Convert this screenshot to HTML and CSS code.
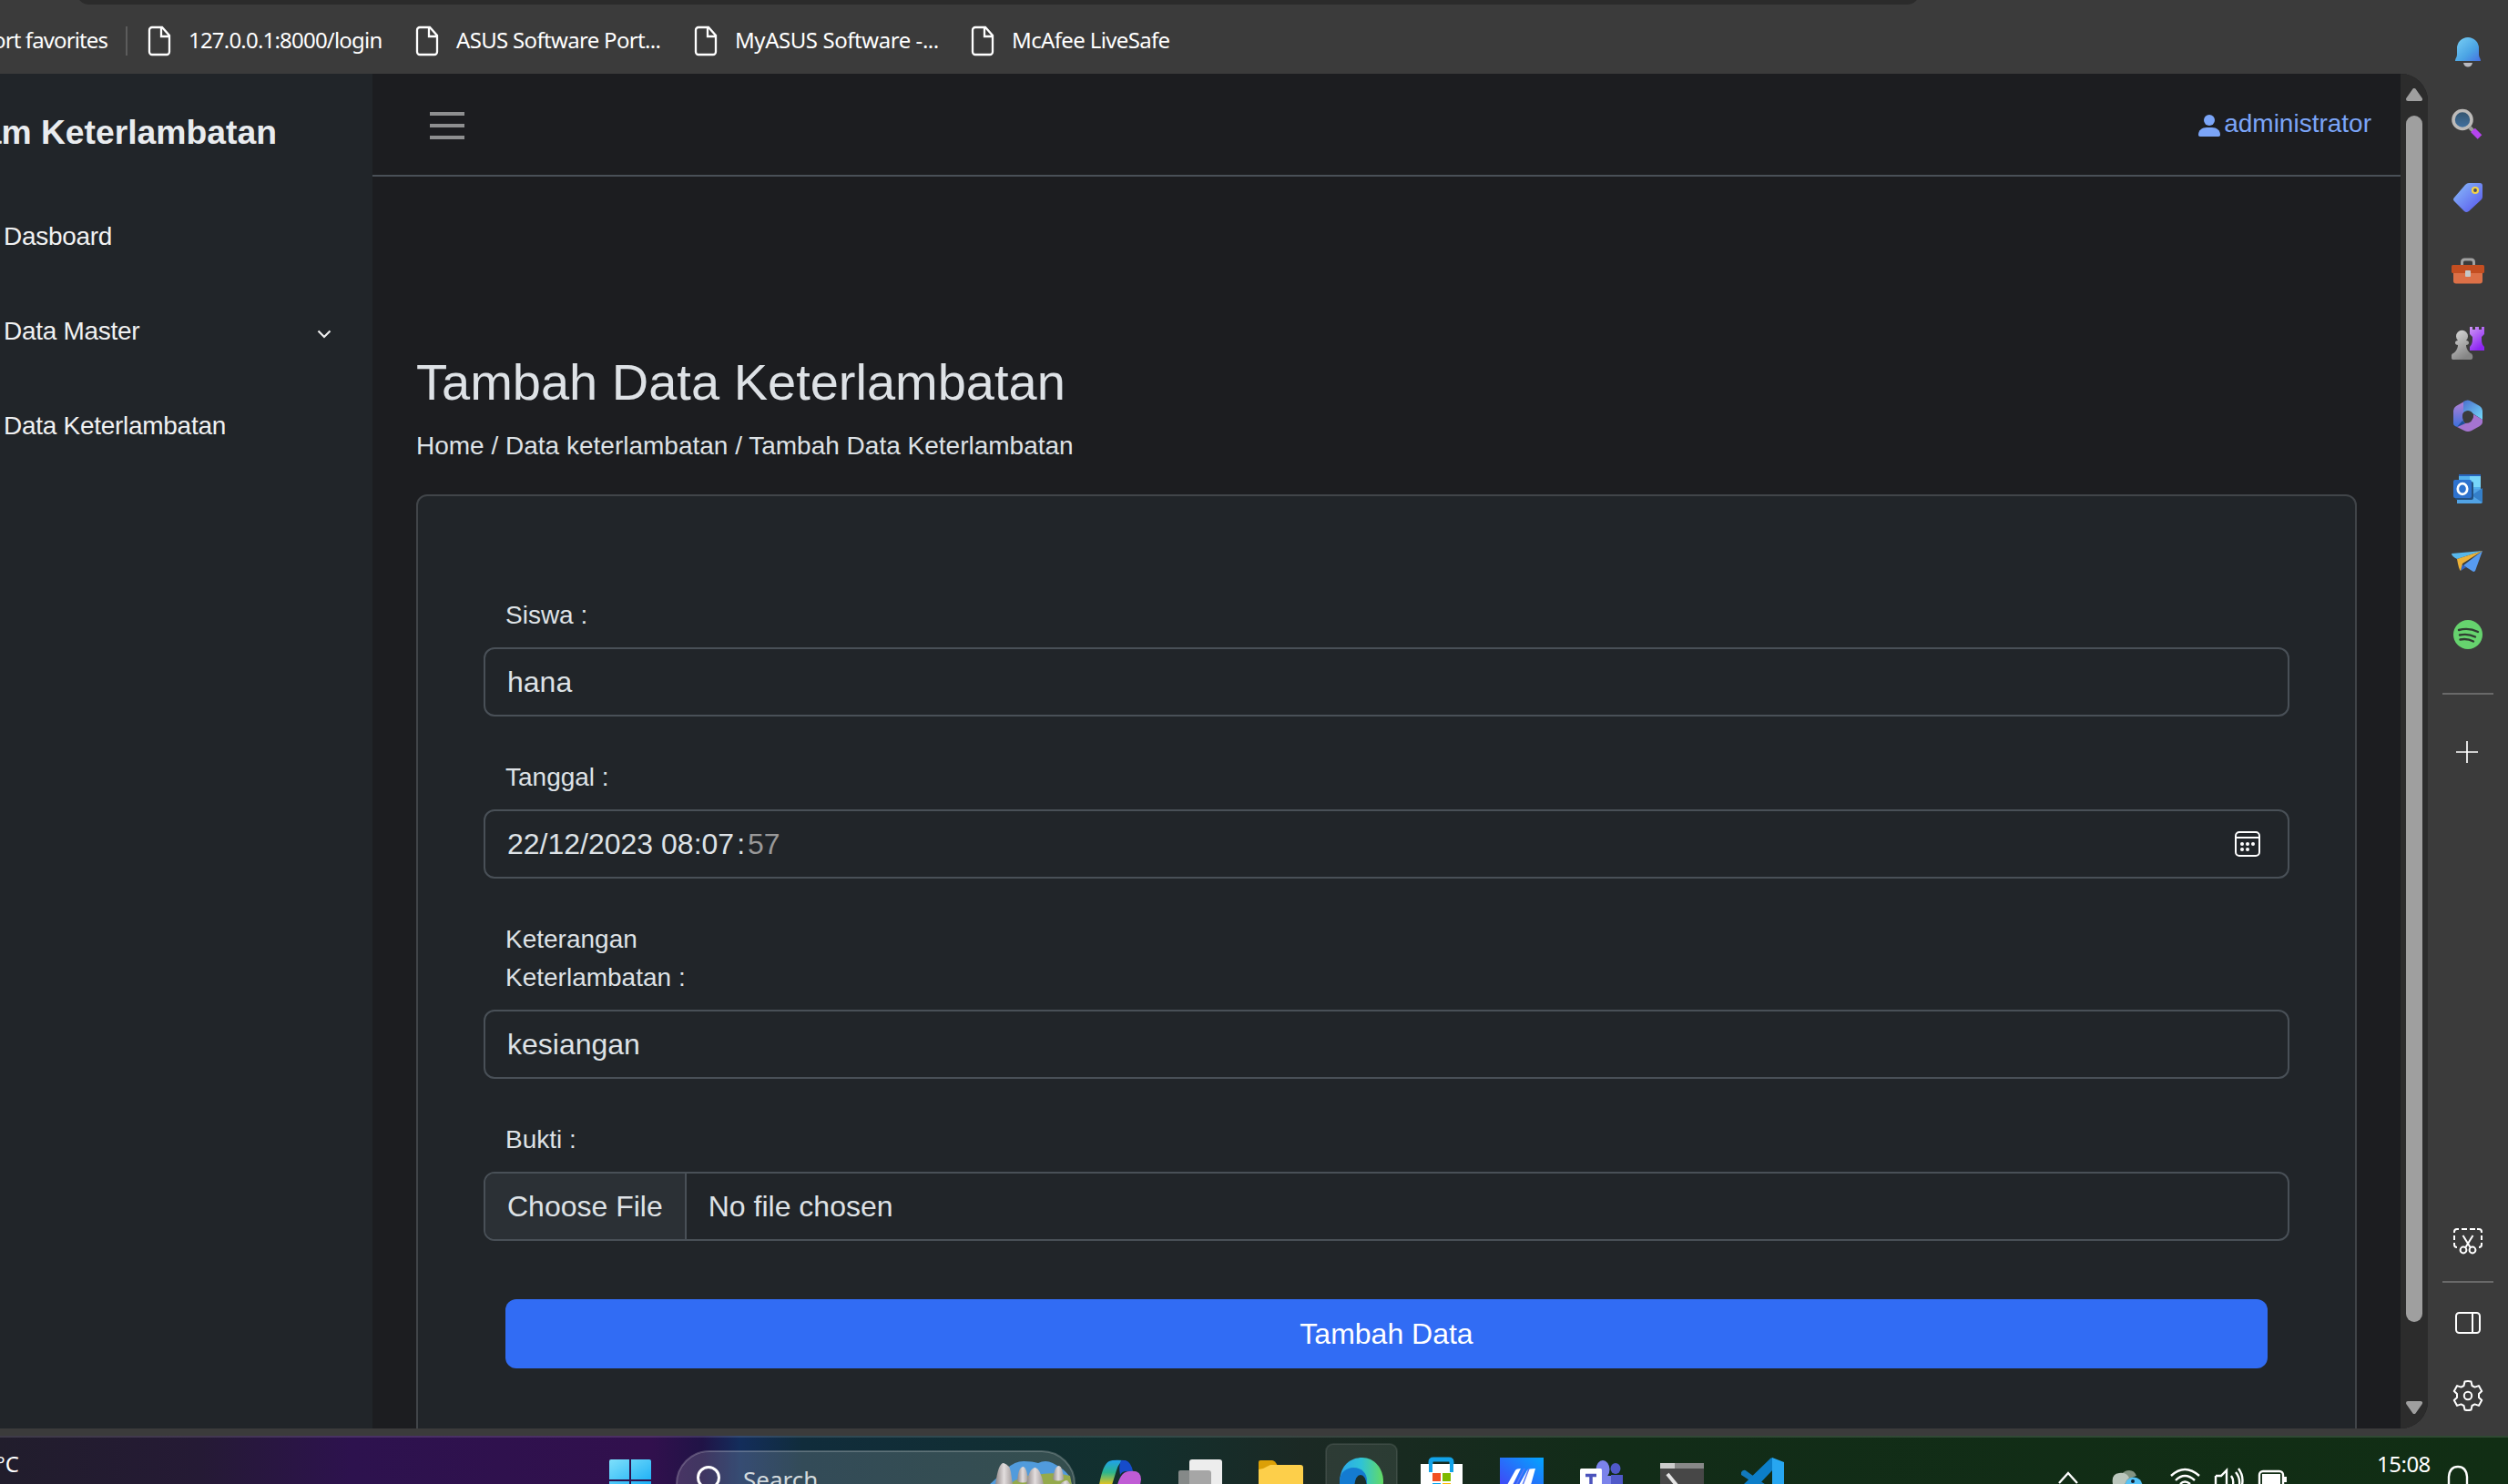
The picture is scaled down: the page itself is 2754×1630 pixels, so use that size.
FILE: index.html
```html
<!DOCTYPE html>
<html lang="id"><head><meta charset="utf-8"><title>Tambah Data Keterlambatan</title><link rel="stylesheet" href="styles.css"></head>
<body>
<div class="screen">
  <div class="browser">
    <div class="window">
      <header class="favorites">
        <div class="address"></div>
        <span class="fav fav-import">Import favorites</span><i class="fav-sep"></i>
        <span class="fav f1"><svg class="doc" viewBox="0 0 26 34"><path d="M5 2h11l8 9v18a3 3 0 0 1-3 3H5a3 3 0 0 1-3-3V5a3 3 0 0 1 3-3zM15 2v10h9"/></svg><b>127.0.0.1:8000/login</b></span>
        <span class="fav f2"><svg class="doc" viewBox="0 0 26 34"><path d="M5 2h11l8 9v18a3 3 0 0 1-3 3H5a3 3 0 0 1-3-3V5a3 3 0 0 1 3-3zM15 2v10h9"/></svg><b>ASUS Software Port...</b></span>
        <span class="fav f3"><svg class="doc" viewBox="0 0 26 34"><path d="M5 2h11l8 9v18a3 3 0 0 1-3 3H5a3 3 0 0 1-3-3V5a3 3 0 0 1 3-3zM15 2v10h9"/></svg><b>MyASUS Software -...</b></span>
        <span class="fav f4"><svg class="doc" viewBox="0 0 26 34"><path d="M5 2h11l8 9v18a3 3 0 0 1-3 3H5a3 3 0 0 1-3-3V5a3 3 0 0 1 3-3zM15 2v10h9"/></svg><b>McAfee LiveSafe</b></span>
      </header>
      <div class="viewport">
        <nav class="sidebar">
          <div class="brand"><span>Rekam Keterlambatan</span></div>
          <a class="side-link">Dasboard</a>
          <a class="side-link">Data Master<svg class="chev" viewBox="0 0 16 10"><path d="M1.5 1.5 8 8l6.500-6.500"/></svg></a>
          <a class="side-link">Data Keterlambatan</a>
        </nav>
        <main class="main">
          <div class="topbar">
            <div class="burger"><i></i><i></i><i></i></div>
            <a class="user"><svg viewBox="0 0 24 24"><circle cx="12" cy="6" r="6"/><path d="M0 22c0-5 4-8 9-8h6c5 0 9 3 9 8 0 1.300-.7 2-2 2H2c-1.300 0-2-.7-2-2z"/></svg><span>administrator</span></a>
          </div>
          <h1>Tambah Data Keterlambatan</h1>
          <p class="crumbs">Home / Data keterlambatan / Tambah Data Keterlambatan</p>
          <form class="card">
            <label>Siswa :</label>
            <div class="input">hana</div>
            <label>Tanggal :</label>
            <div class="input date"><span>22/12/2023 08:07<span class="colon">:</span><em>57</em></span>
              <svg viewBox="0 0 28 28"><rect x="1" y="1" width="26" height="26" rx="4"/><path d="M1 7h26"/><g class="dots"><circle cx="8" cy="14" r="2"/><circle cx="14" cy="14" r="2"/><circle cx="20" cy="14" r="2"/><circle cx="8" cy="20" r="2"/><circle cx="14" cy="20" r="2"/></g></svg></div>
            <label>Keterangan<br>Keterlambatan :</label>
            <div class="input">kesiangan</div>
            <label>Bukti :</label>
            <div class="input file"><span class="choose">Choose File</span><span>No file chosen</span></div>
            <button type="button">Tambah Data</button>
          </form>
        </main>
        <div class="scroll">
          <svg viewBox="0 0 18 14"><path d="M9 2 16 12H2z"/></svg>
          <div class="thumb"></div>
          <svg class="down" viewBox="0 0 18 14"><path d="M9 12 16 2H2z"/></svg>
        </div>
      </div>
    </div>
    <aside class="rail">
      <svg class="ri" viewBox="0 0 36 36"><defs><linearGradient id="bell" x2="1" y2="1"><stop stop-color="#7ad0f5"/><stop offset=".6" stop-color="#4ba4e4"/><stop offset="1" stop-color="#4670e0"/></linearGradient></defs><path d="M4 27c0-3 2-4 2-7v-7a12 12 0 0 1 24 0v7c0 3 2 4 2 7z" fill="url(#bell)"/><path d="M13 29h10c-1 6-9 6-10 0z" fill="#b9b9bf"/></svg>
      <svg class="ri r-search" viewBox="0 0 36 36"><defs><linearGradient id="lens" y2="1" x2="0"><stop stop-color="#34536b"/><stop offset="1" stop-color="#4273a4"/></linearGradient></defs><path d="m20 22 4 4" stroke="#999" stroke-width="4"/><path d="m23.500 25 7.500 7.500" stroke="#b544ee" stroke-width="6.500"/><circle cx="12" cy="13.500" r="10" fill="url(#lens)" stroke="#bdbbb9" stroke-width="3.600"/></svg>
      <svg class="ri r-tag" viewBox="0 0 36 36"><defs><linearGradient id="tag" x2="1" y2="1"><stop stop-color="#8bc0fa"/><stop offset=".8" stop-color="#6068ef"/><stop offset="1" stop-color="#4b45ce"/></linearGradient></defs><path d="M19 2h12q3 0 3 3v12q0 2-1.500 3.500L19 33q-3 2-5 0L3 22q-2-2 0-4L15 4q2-2 4-2z" fill="url(#tag)"/><circle cx="26" cy="10" r="3" fill="#464e61" stroke="#f4d245" stroke-width="2.200"/></svg>
      <svg class="ri r-tools" viewBox="0 0 36 36"><path d="M11.500 12V8q0-3 3-3h7q3 0 3 3v4" fill="none" stroke="#a2a2a2" stroke-width="3"/><rect x="2" y="16" width="32" height="15.500" rx="3" fill="#dc7047"/><rect y="11" width="36" height="9" rx="1.500" fill="#c44e21"/><rect x="15" y="17" width="6" height="7" rx="1" fill="#c4c7c8"/></svg>
      <svg class="ri r-games" viewBox="0 0 36 36"><defs><linearGradient id="rook" y2="1" x2=".5"><stop stop-color="#cf99f5"/><stop offset="1" stop-color="#8d25f3"/></linearGradient><linearGradient id="pawn" y2="1" x2=".5"><stop stop-color="#ddd"/><stop offset="1" stop-color="#858585"/></linearGradient></defs><path d="M20 0h3v3h3V0h4v3h3V0h3v8l-3 3c0 5 0 8 3 11v4H20v-4c3-3 3-6 3-11l-3-3z" fill="url(#rook)"/><path d="M7 15a6.500 6.500 0 1 1 9 0c4 0 4 5 0 5 0 4 3 8 5 9 3 1 3 7 0 7H2c-3 0-3-6 0-7 2-1 5-5 5-9-4 0-4-5 0-5z" fill="url(#pawn)"/></svg>
      <svg class="ri" viewBox="0 0 36 36"><defs><linearGradient id="ma" y2="1" x2="0"><stop stop-color="#b481d6"/><stop offset="1" stop-color="#3d70dc"/></linearGradient><linearGradient id="mb" x2="1" y2="1"><stop stop-color="#4c70ce"/><stop offset="1" stop-color="#72dafa"/></linearGradient></defs><path d="M14 2 5 7q-3 2-3 5v14q0 3 5 4l8-4q-3-3-3-8 0-3 2-5z" fill="url(#ma)"/><path d="M13 14V2q5-3 9 0l9 5q3 2 3 5v10L23 15q-4-4-10-1z" fill="url(#mb)"/><path d="m6 30 9-4q9 0 9-10l10 6v3q0 2-3 4l-9 5q-4 2-8 0z" fill="#a574d0"/><path d="m6 30 9-4-3-3z" fill="#1f4f98"/><circle cx="18" cy="18" r="6" fill="#3b3b3b"/></svg>
      <svg class="ri" viewBox="0 0 36 36"><path d="M8 2h24v18H8z" fill="#54b1ec"/><path d="M20 2h12v14H20z" fill="#77d6fa"/><path d="M8 2h24v2H8z" fill="#2865bd"/><path d="M6 18h28v14q0 2-2 2H6z" fill="#51a3e5"/><path d="M34 17v16L22 25z" fill="#347fc9"/><rect x="4" y="10" width="20" height="20" rx="2" fill="#23507f"/><rect x="2" y="8" width="20" height="20" rx="2" fill="#2e72ce"/><ellipse cx="12" cy="18" rx="5.200" ry="5.800" fill="none" stroke="#fff" stroke-width="2.700"/></svg>
      <svg class="ri" viewBox="0 0 36 36"><path d="M0 9 34 6 6 15Q0 12 0 9z" fill="#58b8ec"/><path d="M34 6 13 22l11 7q1 0 2-1z" fill="#579bf0"/><path d="m11 21-1 7 6-4z" fill="#2f64c7"/><path d="M6 15 34 6 12 20l-2 8q-2-1-4-13z" fill="#edb238"/></svg>
      <svg class="ri" viewBox="0 0 36 36"><circle cx="18" cy="18" r="16" fill="#66d36e"/><path d="M8 13q11-3 21 2M9 18.500q9-2 17 2M9.500 23.500q8-1.500 14.500 2" fill="none" stroke="#303c32" stroke-width="2.400" stroke-linecap="round"/></svg>
      <i class="rail-line"></i>
      <svg class="ri line r-plus" viewBox="0 0 36 36"><path d="M17 6v24M5 18h24"/></svg>
      <svg class="ri line r-shot" viewBox="0 0 36 36"><path d="M3 8V7q0-3 3-3h2M11 4h6M20 4h6M28 4h2q3 0 3 3v1M3 11v5M33 11v5M3 19v2q0 3 3 3M33 19v2q0 3-3 3M12.500 11l8 13M23.500 11l-8 13"/><circle cx="13" cy="27" r="3.400"/><circle cx="23" cy="27" r="3.400"/></svg>
      <i class="rail-line r-low"></i>
      <svg class="ri line r-panel" viewBox="0 0 36 36"><rect x="5" y="7" width="26" height="22" rx="3.500"/><path d="M23 7v22"/></svg>
      <svg class="ri line" viewBox="0 0 36 36"><path d="M14.500 2.500q3.500-1 7 0l1 4.500 3 1.600 4.400-1.500 3.300 6-3.200 3v3.800l3.200 3-3.300 6-4.400-1.500-3 1.600-1 4.500q-3.500 1-7 0l-1-4.500-3-1.600-4.400 1.500-3.300-6 3.200-3v-3.800l-3.200-3 3.300-6 4.400 1.500 3-1.600z"/><circle cx="18" cy="18" r="4.200"/></svg>
    </aside>
  </div>
  <footer class="taskbar">
    <span class="temp">29°C</span>
    <svg class="tasks" viewBox="0 0 2754 51"><defs><linearGradient id="win" x2="1" y2="1"><stop stop-color="#7ee0fb"/><stop offset="1" stop-color="#18adf5"/></linearGradient><linearGradient id="edge"><stop stop-color="#2ba6ec"/><stop offset=".5" stop-color="#2fc3d6"/><stop offset="1" stop-color="#64db63"/></linearGradient><linearGradient id="cop" y2="1" x2="0"><stop stop-color="#20a0ee"/><stop offset=".5" stop-color="#2bb58e"/><stop offset="1" stop-color="#ecc41b"/></linearGradient><linearGradient id="my" x2="1" y1="1" y2="0"><stop stop-color="#4a3af5"/><stop offset="1" stop-color="#02a6ff"/></linearGradient><linearGradient id="rock"><stop stop-color="#8f8787"/><stop offset=".5" stop-color="#e2dddd"/><stop offset="1" stop-color="#a39c9c"/></linearGradient></defs>
      <path d="M669 26q0-2 2-2h20v22h-22zM693 24h20q2 0 2 2v20h-22zM669 48h22v4h-22zM693 48h22v4h-22z" fill="url(#win)"/>
      <rect class="search" x="743" y="15" width="437" height="72" rx="36"/>
      <circle cx="778" cy="44" r="11.500" fill="none" stroke="#fff" stroke-width="3"/>
      <path d="M1086 52q10-9 20-18 8-8 18-8 10 0 16 2 8-4 16 0 12 6 18 14l3 10z" fill="#519bdc"/><path d="M1108 52q8-9 30-11 20-4 37 1l2 10z" fill="#95aa4c"/>
      <g fill="url(#rock)"><path fill="url(#rock)" d="M1093 52q3-24 9-24 7 2 8 10l2 14z"/><path d="M1117 48q1-16 7-16 4 2 5 16-6 3-12 0z"/><path d="M1127 52q3-19 10-19 6 2 9 19z"/><path d="M1156 46q2-15 7-15 4 1 5 15-6 3-12 0z"/><path d="M1163 52q5-5 9-5l4 5z"/></g>
      <path d="M1207 52q4-23 11-26 4-2 16-1-6 3-8 11l-5 16z" fill="url(#cop)"/><path d="M1231 25h5q6 2 8 12h-7q-5 0-7 4-2-10 1-16z" fill="#164ccb"/><path d="M1227 52q4-15 13-15 13-2 13 9l-1 6z" fill="#c05cd5"/>
      <rect x="1306" y="24" width="36" height="40" rx="3" fill="#ededed"/><path d="M1296 36h31q3 0 3 3v24h-36V38q0-2 2-2z" fill="#999" opacity=".85"/>
      <path d="M1382 27q0-2 2-2h13q3 0 6 6l2 4h-23z" fill="#dca006"/><path d="M1382 35l5-1 8-4h33q3 0 3 3v20h-49z" fill="#fdcf4a"/>
      <rect class="active" x="1456" y="7" width="78" height="80" rx="8"/>
      <path d="M1471 62V48c1-18 12-26 25-26s23 12 23 26c0 9-4 13-9 14z" fill="url(#edge)"/><path d="M1471 62V46c1-8 8-13 15-13 10 0 15 7 15 14v15z" fill="#147bd1"/><ellipse cx="1494" cy="52" rx="6.500" ry="11" fill="#1c2f2b"/>
      <path d="M1571 38V27q0-3 3-3h17q3 0 3 3v11" fill="none" stroke="#12a3e9" stroke-width="5"/><path d="M1560 29h46v24h-46z" fill="#fff"/><path d="M1571 24v14M1594 24v14" stroke="#12a3e9" stroke-width="4"/><path d="M1573 39h9v9h-9z" fill="#f25022"/><path d="M1584 39h9v9h-9z" fill="#7fba00"/><path d="M1573 50h9v2h-9z" fill="#00a4ef"/><path d="M1584 50h9v2h-9z" fill="#ffb900"/>
      <rect x="1647" y="22" width="48" height="40" fill="url(#my)"/><path d="m1655 52 9-16q1-2 6-2l-9 18zM1668 52l9-16q1-2 9-2l-5 18z" fill="#fff"/><path d="m1665 52 9-18M1672 52l7-18" stroke="#5a7bf8" stroke-width="1.500"/>
      <ellipse cx="1760" cy="35" rx="7.500" ry="10" fill="#7b83eb"/><ellipse cx="1774" cy="34" rx="5.500" ry="6" fill="#5059c9"/><path d="M1755 42h16v10h-16z" fill="#7b83eb"/><path d="M1769 41h13v13h-13z" fill="#5059c9"/><rect x="1735" y="34" width="24" height="30" rx="1.500" fill="#fff"/><path d="M1741 41.500h12M1747 41v11" stroke="#4b53bc" stroke-width="3.500"/>
      <path d="M1823 28h48v24h-48z" fill="#474747"/><path d="M1823 28h48v6h-48z" fill="#888"/><path d="M1823 28h16v6h-16z" fill="#ccc"/><path d="m1831 40 9 11-3 4" fill="none" stroke="#e4e4e4" stroke-width="4"/>
      <path d="M1912 38q3-4 6-1l24 17h-10l-20-13z" fill="#1279bd"/><path d="m1914 52 29-28q2-3 4-1v12l-16 17z" fill="#0c7ec9"/><path d="m1946 22 13 5v25h-13z" fill="#27a6f1"/>
      <g class="tray"><path d="m2261 50 10-11 10 11"/><path d="M2384 42q15-14 31 0M2389 47q10-10 21 0M2394 51q5-5 11 0"/><path d="M2433 42h6l6-6v16M2433 42v10M2450 42q3 4 2 10M2455 38q5 6 4 14M2458 34q6 8 4 18"/><rect x="2481" y="37" width="26" height="20" rx="4"/><path d="M2689 52V43q1-11 10-11t10 11v9"/></g>
      <path d="M2484 40h20v12h-20zM2508 43h3v6h-3z" fill="#fff"/><path d="M2330 40q3-4 8-4 6 0 8 6-8 2-12 10l-6-10z" fill="#839483"/><path d="M2320 51q-2-11 7-12 8-1 11 5-4 3-5 8z" fill="#bbc6bd"/><circle cx="2343" cy="53" r="9.500" fill="#53c2f7"/><circle cx="2342" cy="48" r="2" fill="#123"/>
    </svg>
    <span class="search-text">Search</span><span class="time">15:08</span>
  </footer>
</div>
</body></html>
```
FILE: styles.css
```css
*{box-sizing:border-box}
body{margin:0;background:#3b3b3b;font-family:"Liberation Sans",Arial,sans-serif;color:#dee2e6;overflow:hidden}
.screen{width:2754px;height:1630px;overflow:hidden;display:flex;flex-direction:column}
.browser{height:1577px;display:flex}
.window{width:2666px}
.favorites{position:relative;height:81px;padding-top:9px;display:flex;align-items:center;font:24px "Noto Sans",sans-serif;color:#fff;overflow:hidden}
.address{position:absolute;left:84px;top:-40px;width:2024px;height:45px;border-radius:14px;background:#2b2b2b}
.fav{display:flex;align-items:center;white-space:nowrap}
.fav b{font-weight:400;position:relative;top:-2px}
.fav-import{width:118px;height:36px;padding-bottom:3px;justify-content:flex-end;letter-spacing:-.9px}
.fav-sep{width:2px;height:32px;background:#5c5c5c;margin-left:20px}
.doc{width:26px;height:34px;margin-right:19px;fill:none;stroke:#fff;stroke-width:2.300;flex:none}
.f1{margin-left:22px;width:294px;letter-spacing:-.8px}
.f2{width:306px;letter-spacing:-.68px}
.f3{width:304px;letter-spacing:-.44px}
.f4{letter-spacing:-.64px}
.viewport{height:1488px;display:flex;border-radius:0 30px 30px 0;overflow:hidden;background:#1c1d20}
.sidebar{width:409px;background:#212529;overflow:hidden}
.brand{width:304px;height:128px;margin-bottom:-1px;display:flex;align-items:center;justify-content:flex-end;white-space:nowrap;font-size:37.300px;font-weight:700;color:#e9ecef}
.side-link{display:flex;align-items:center;justify-content:space-between;height:104px;padding:0 45px 0 4px;font-size:28px;letter-spacing:-.28px;color:#f0f1f2}
.chev{width:16px;height:10px;margin-top:5px;fill:none;stroke:#eee;stroke-width:2.200}
.main{width:2227px;background:#1c1d20;overflow:hidden}
.topbar{height:113px;border-bottom:2px solid #495057;display:flex;justify-content:space-between;padding:42px 32px 0 63px}
.burger{display:flex;flex-direction:column;gap:9px}
.burger i{width:38px;height:4px;background:#8e8f90}
.user{display:flex;height:28px;color:#7ba5f8;font-size:28px;line-height:25px}
.user svg{width:24px;height:24px;fill:currentColor;margin:3px 4px 0 0}
h1{margin:192px 0 0 48px;font-size:56px;line-height:67px;font-weight:400}
.crumbs{margin:16px 0 0 48px;font-size:28px;line-height:42px}
.card{margin:32px 48px 0;height:1200px;border:2px solid #414549;border-radius:12px;background:#212529;padding:110px 72px 0}
label{display:block;margin-left:24px;font-size:28px;line-height:42px}
.input{height:76px;margin:14px 0 46px;border:2px solid #495057;border-radius:12px;padding:0 24px;display:flex;align-items:center;font-size:32px;overflow:hidden}
.date{justify-content:space-between;padding-right:30px}
.colon{margin:0 3px}
.date em{font-style:normal;color:#999}
.date svg{width:28px;height:28px;fill:none;stroke:#fff;stroke-width:2}
.date .dots{fill:#fff;stroke:none}
.choose{align-self:stretch;display:flex;align-items:center;margin:0 24px 0 -24px;padding:0 24px;background:#2b3035;border-right:2px solid #495057}
button{display:block;width:calc(100% - 48px);height:76px;margin:64px 24px 0;border:0;border-radius:12px;background:#316cf4;color:#fff;font:32px "Liberation Sans",sans-serif}
.scroll{width:30px;background:#2c2c2c;padding-top:16px;display:flex;flex-direction:column;align-items:center}
.scroll svg{width:18px;height:14px;fill:#9f9f9f;stroke:#9f9f9f;stroke-width:4;stroke-linejoin:round}
.thumb{width:18px;height:1325px;margin:16px 0 87px;border-radius:9px;background:#9f9f9f}
.rail{width:88px;padding-top:40px;display:flex;flex-direction:column;align-items:center}
.ri{width:36px;height:36px;flex:none;margin-top:44px}
.ri:first-child{margin-top:0}
.r-search{margin-top:42px}
.r-tag,.r-tools,.r-plus{margin-top:45px}
.r-games{margin-top:43px}
.r-shot{margin-top:502px}
.r-panel{margin-top:26px}
.rail-line{width:56px;height:2px;margin-top:46px;background:#696969;flex:none}
.r-low{margin-top:25px}
.line{fill:none;stroke:#fff;stroke-width:2;stroke-linejoin:round}
.r-plus{stroke-width:1.700}
.taskbar{position:relative;height:53px;border-top:2px solid #ffffff22;background:linear-gradient(90deg,#211d2c 0,#251a35 8%,#2d124e 14%,#31104d 26%,#201346 28%,#132d5b 29.500%,#102c3b 32%,#12302e 45%,#1b2924 52%,#122c18 64%,#112e14 100%) border-box;color:#fff;font:24px "Noto Sans",sans-serif;overflow:hidden}
.tasks{display:block;width:2754px;height:51px}
.search{fill:#ffffff26;stroke:#ffffff38;stroke-width:2}
.active{fill:#ffffff16;stroke:#ffffff16;stroke-width:2}
.tray{fill:none;stroke:#fff;stroke-width:2.400}
.temp,.time,.search-text{position:absolute;white-space:nowrap;line-height:32px}
.temp{right:2733px;top:13px}
.time{left:2610px;top:13px;letter-spacing:-.5px}
.search-text{left:816px;top:30px;color:#d3dadd;font-size:26px}
```
